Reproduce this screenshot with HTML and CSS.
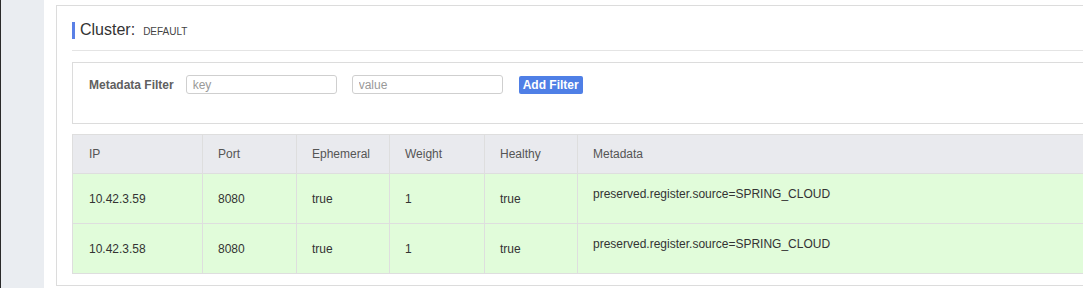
FILE: index.html
```
<!DOCTYPE html>
<html lang="en">
<head>
    <meta charset="UTF-8">
    <meta name="viewport" content="width=device-width, initial-scale=1.0">
    <title>Cluster DEFAULT</title>
    <link rel="stylesheet" href="styles.css">
</head>
<body>
<div class="sidebar"></div>
<div class="main">
    <div class="card">
        <div class="card-header">
            <span class="title-bar"></span>
            <span class="title">Cluster:</span>
            <span class="subtitle">DEFAULT</span>
        </div>

        <!-- metadata filter -->
        <div class="filter-box">
            <label class="filter-label">Metadata Filter</label>
            <input type="text" class="filter-input" placeholder="key">
            <input type="text" class="filter-input" placeholder="value">
            <button class="filter-button">Add Filter</button>
        </div>

        <table class="instance-table">
            <thead>
                <tr>
                    <th class="col-ip">IP</th>
                    <th class="col-port">Port</th>
                    <th class="col-eph">Ephemeral</th>
                    <th class="col-weight">Weight</th>
                    <th class="col-healthy">Healthy</th>
                    <th>Metadata</th>
                </tr>
            </thead>
            <tbody>
                <tr>
                    <td>10.42.3.59</td>
                    <td>8080</td>
                    <td>true</td>
                    <td>1</td>
                    <td>true</td>
                    <td class="meta">preserved.register.source=SPRING_CLOUD</td>
                </tr>
                <tr>
                    <td>10.42.3.58</td>
                    <td>8080</td>
                    <td>true</td>
                    <td>1</td>
                    <td>true</td>
                    <td class="meta">preserved.register.source=SPRING_CLOUD</td>
                </tr>
            </tbody>
        </table>
    </div>
</div>
</body>
</html>
```

FILE: styles.css
```
body {
    margin: 0;
    display: flex;
    height: 288px;
    overflow: hidden;
    font-family: "Liberation Sans", Arial, sans-serif;
    font-size: 12px;
    color: #333;
    background: #fff;
}
.sidebar {
    width: 43px;
    flex: none;
    background: #eaedf1;
    border-left: 1px solid #2a2a2a;
}
.main {
    flex: 1;
    padding: 5px 0 0 12px;
    overflow: hidden;
}
.card {
    width: 1100px;
    border: 1px solid #dcdcdc;
    padding: 0 15px 11px 15px;
}
.card-header {
    display: flex;
    align-items: center;
    height: 22px;
    padding: 13px 0 9px;
    border-bottom: 1px solid #e4e4e4;
}
.title-bar {
    width: 3px;
    height: 17px;
    background: #5a80e6;
    margin-right: 5px;
}
.title {
    font-size: 16px;
    color: #333;
}
.subtitle {
    font-size: 10px;
    color: #444;
    margin-left: 8px;
    padding-top: 3px;
}
.filter-box {
    margin-top: 11px;
    border: 1px solid #dcdcdc;
    padding: 12px 15px 29px 16px;
    display: flex;
    align-items: center;
}
.filter-label {
    font-weight: bold;
    color: #606060;
    margin-right: 12px;
}
.filter-input {
    box-sizing: border-box;
    width: 151px;
    height: 19px;
    margin: 0 15px 0 0;
    padding: 0 6px;
    border: 1px solid #cfcfcf;
    border-radius: 3px;
    font-family: inherit;
    font-size: 12px;
    color: #333;
}
.filter-input::placeholder {
    color: #999;
}
.filter-button {
    height: 18px;
    width: 64px;
    margin-left: 1px;
    padding: 0;
    border: none;
    border-radius: 2px;
    background: #4f7fe6;
    color: #fff;
    font-family: inherit;
    font-size: 12px;
    font-weight: bold;
    cursor: pointer;
}
.instance-table {
    margin-top: 10px;
    width: 100%;
    border-collapse: collapse;
    border: 1px solid #dedede;
}
.instance-table th,
.instance-table td {
    text-align: left;
    font-weight: normal;
    padding: 0 15px;
    border: 1px solid #dedede;
}
.instance-table th {
    height: 38px;
    background: #e9eaee;
    color: #555;
}
.instance-table td {
    height: 49px;
    background: #e1fcda;
    color: #333;
}
.instance-table td:first-child,
.instance-table th:first-child {
    padding-left: 16px;
}
.instance-table td.meta {
    vertical-align: top;
    padding-top: 13px;
    height: 36px;
}
.col-ip { width: 98px; }
.col-port { width: 63px; }
.col-eph { width: 62px; }
.col-weight { width: 64px; }
.col-healthy { width: 62px; }
```
